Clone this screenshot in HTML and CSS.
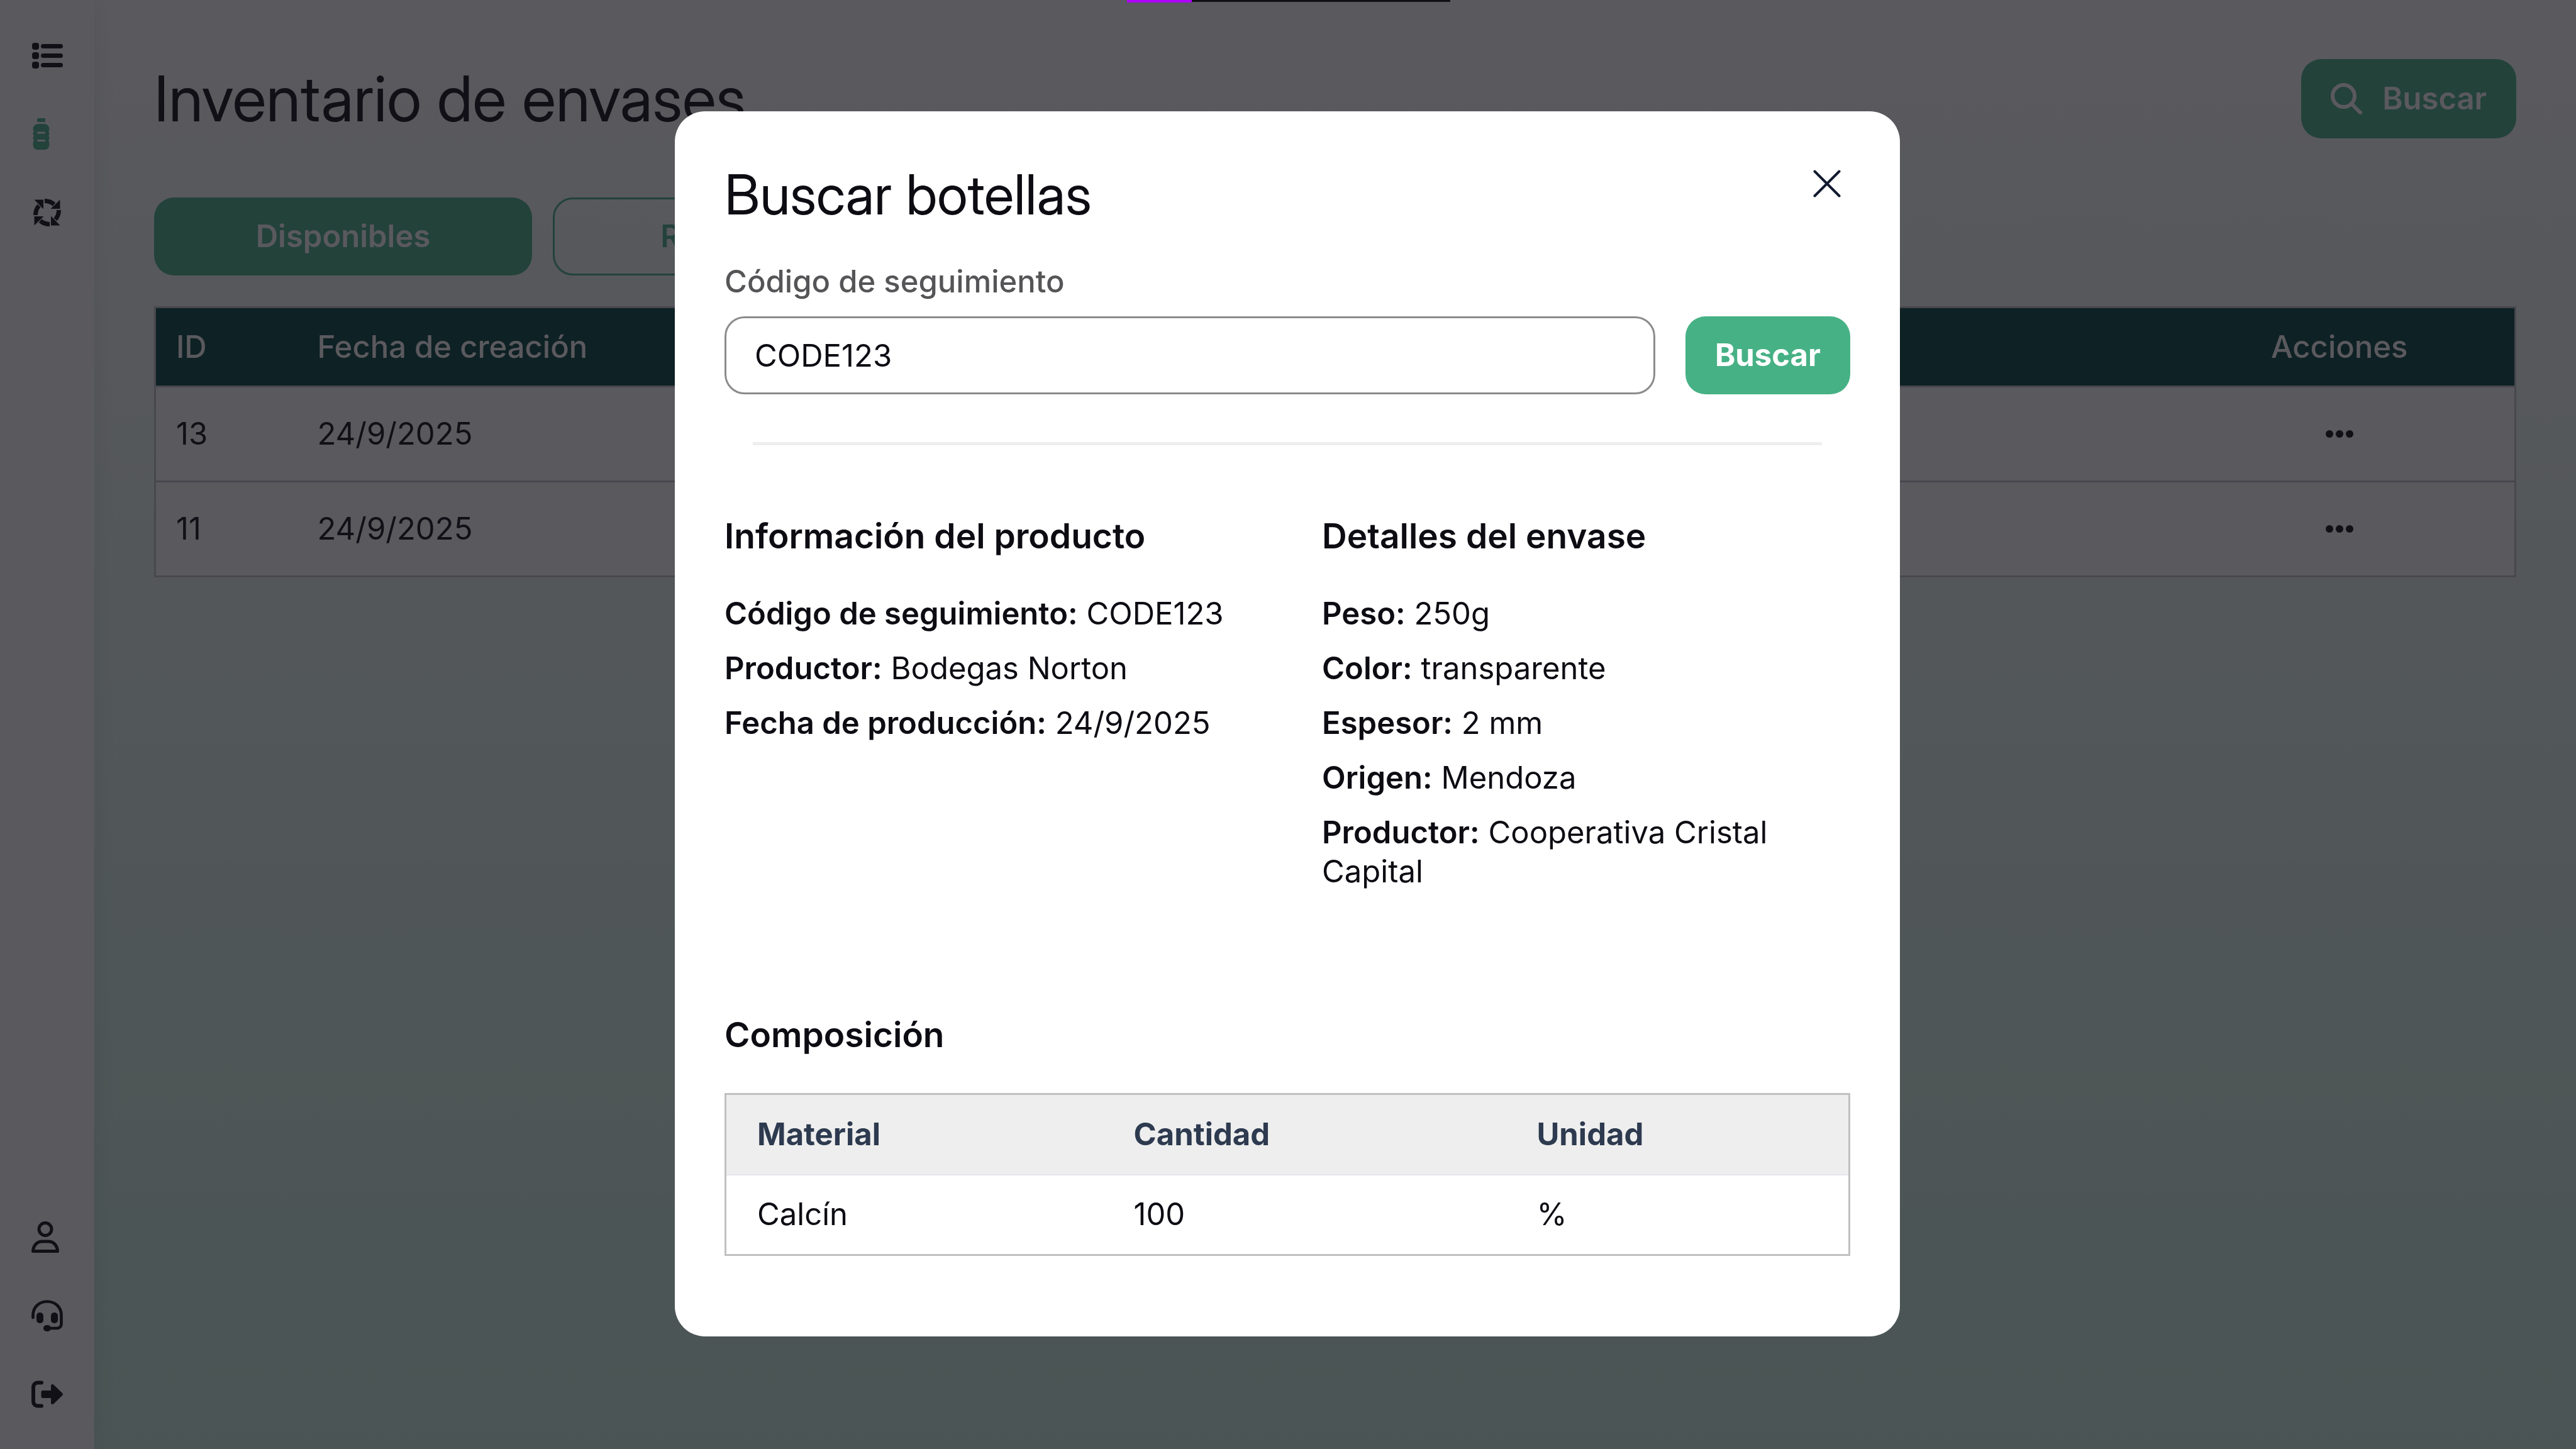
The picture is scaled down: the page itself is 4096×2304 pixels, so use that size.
FILE: index.html
```html
<!DOCTYPE html>
<html lang="es">
<head>
<meta charset="utf-8">
<meta name="viewport" content="width=device-width, initial-scale=1">
<title>Inventario de envases</title>
<link rel="stylesheet" href="styles.css">
</head>
<body>
<div class="app">
  <nav class="sidebar">
    <div class="sidebar-group">
      <a class="nav-link" href="#" aria-label="Lista">
        <svg class="icon" viewBox="0 0 50 50" fill="currentColor"><rect x="1" y="5" width="11" height="11" rx="4"/><rect x="1" y="20" width="11" height="11" rx="4"/><rect x="1" y="35" width="11" height="11" rx="4"/><rect x="15" y="7" width="35" height="7" rx="3.5"/><rect x="15" y="22" width="35" height="7" rx="3.5"/><rect x="15" y="37" width="35" height="7" rx="3.5"/></svg>
      </a>
      <a class="nav-link nav-link-active" href="#" aria-label="Envases">
        <svg class="icon" viewBox="0 0 50 50" fill="currentColor"><rect x="9" y="0" width="13" height="6" rx="1"/><path fill-rule="evenodd" d="M11 9h9c5 0 8.500 4 8.500 8 0 2-.8 3-1.600 4 2.200 2 2.200 5.500 0 7 2.200 2 2.200 5 0 7.500 1 1 1.600 2.500 1.600 5.500 0 5-2.500 9-7 9h-12c-4.500 0-7-4-7-9 0-3 .6-4.500 1.600-5.500-2.200-2.500-2.200-5.500 0-7.500-2.200-1.500-2.200-5 0-7-.8-1-1.600-2-1.600-4C2.500 13 6 9 11 9zM10.500 21.500a1.500 1.500 0 0 0 0 3h10a1.500 1.500 0 0 0 0-3zM10.500 34a1.500 1.500 0 0 0 0 3h10a1.500 1.500 0 0 0 0-3z"/></svg>
      </a>
      <a class="nav-link" href="#" aria-label="Reciclaje">
        <svg class="icon" viewBox="0 0 50 50"><g id="arrow"><path d="M21 6.500c6 0 11 2 15 5.500" fill="none" stroke="currentColor" stroke-width="7"/><path fill="currentColor" d="M45.500 4.500v14.500H30.500z"/></g><use href="#arrow" transform="rotate(90 25 25)"/><use href="#arrow" transform="rotate(180 25 25)"/><use href="#arrow" transform="rotate(270 25 25)"/></svg>
      </a>
    </div>
    <div class="sidebar-group">
      <a class="nav-link" href="#" aria-label="Perfil">
        <svg class="icon" viewBox="0 0 50 50" fill="none" stroke="currentColor" stroke-width="5"><circle cx="22" cy="12.500" r="10"/><path stroke-linejoin="round" d="M2.500 47.500C3 38 9 32 17 32h10c8 0 14 6 14.500 15.500z"/></svg>
      </a>
      <a class="nav-link" href="#" aria-label="Soporte">
        <svg class="icon" viewBox="0 0 50 50" fill="currentColor"><path fill="none" stroke="currentColor" stroke-width="4.700" stroke-linecap="round" d="M2.500 28v-4C2.500 11.500 12.500 2.500 25 2.500S47.500 11.500 47.500 24v14c0 4-2.500 7-7 7H28"/><rect x="8" y="20" width="11" height="17" rx="5"/><rect x="31" y="20" width="11" height="17" rx="5"/><rect x="19" y="40" width="12" height="10" rx="5"/></svg>
      </a>
      <a class="nav-link" href="#" aria-label="Salir">
        <svg class="icon" viewBox="0 0 50 50" fill="currentColor"><path fill="none" stroke="currentColor" stroke-width="6" stroke-linecap="round" d="M16 6.500h-5.500c-4.500 0-7.500 3-7.500 7.500v22c0 4.500 3 7.500 7.500 7.500H16"/><path d="M18 19h13v-7c0-3 2.500-4 4.500-2l13 12.500c2 2 2 3 0 5l-13 12.500c-2 2-4.500 1-4.500-2v-7H18c-1.500 0-2.500-1-2.500-2.500v-7c0-1.500 1-2.500 2.500-2.500z"/></svg>
      </a>
    </div>
  </nav>

  <main class="main">
    <header class="page-header">
      <h1 class="page-title">Inventario de envases</h1>
      <button class="button button-header" type="button">
        <svg class="icon" viewBox="0 0 50 50" fill="none" stroke="currentColor" stroke-width="6" stroke-linecap="round"><circle cx="20.500" cy="20.500" r="17.500"/><path d="M33 33l14 14"/></svg>
        Buscar
      </button>
    </header>
    <div class="tabs">
      <button class="button tab" type="button">Disponibles</button>
      <button class="button button-outline tab" type="button">Reciclados</button>
    </div>
    <table class="inventory">
      <colgroup><col class="col-id"><col><col class="col-actions"></colgroup>
      <thead>
        <tr><th>ID</th><th>Fecha de creación</th><th class="centered">Acciones</th></tr>
      </thead>
      <tbody>
        <tr><td>13</td><td>24/9/2025</td><td><button class="more" type="button" aria-label="Acciones de 13"><svg class="dots" viewBox="0 0 44 14" fill="currentColor"><circle cx="6" cy="7" r="6"/><circle cx="22" cy="7" r="6"/><circle cx="38" cy="7" r="6"/></svg></button></td></tr>
        <tr><td>11</td><td>24/9/2025</td><td><button class="more" type="button" aria-label="Acciones de 11"><svg class="dots" viewBox="0 0 44 14" fill="currentColor"><circle cx="6" cy="7" r="6"/><circle cx="22" cy="7" r="6"/><circle cx="38" cy="7" r="6"/></svg></button></td></tr>
      </tbody>
    </table>
  </main>
</div>

<div class="overlay">
  <section class="modal" role="dialog" aria-modal="true" aria-labelledby="modal-title">
    <header class="modal-header">
      <h2 class="modal-title" id="modal-title">Buscar botellas</h2>
      <button class="close" type="button" aria-label="Cerrar"><svg class="close-icon" viewBox="0 0 44 44" fill="none" stroke="currentColor" stroke-width="4" stroke-linecap="round"><path d="M2.500 2.500l39 39M41.500 2.500l-39 39"/></svg></button>
    </header>
    <form class="search">
      <label class="search-label" for="code">Código de seguimiento</label>
      <div class="search-row">
        <input class="search-input" id="code" type="text" value="CODE123">
        <button class="button" type="button">Buscar</button>
      </div>
    </form>
    <hr class="divider">
    <div class="details">
      <section>
        <h3 class="section-title">Información del producto</h3>
        <ul class="facts">
          <li><strong>Código de seguimiento:</strong> CODE123</li>
          <li><strong>Productor:</strong> Bodegas Norton</li>
          <li><strong>Fecha de producción:</strong> 24/9/2025</li>
        </ul>
      </section>
      <section>
        <h3 class="section-title">Detalles del envase</h3>
        <ul class="facts">
          <li><strong>Peso:</strong> 250g</li>
          <li><strong>Color:</strong> transparente</li>
          <li><strong>Espesor:</strong> 2 mm</li>
          <li><strong>Origen:</strong> Mendoza</li>
          <li><strong>Productor:</strong> Cooperativa Cristal Capital</li>
        </ul>
      </section>
    </div>
    <section>
      <h3 class="section-title">Composición</h3>
      <table class="composition">
        <colgroup><col class="col-material"><col class="col-amount"><col></colgroup>
        <thead><tr><th>Material</th><th>Cantidad</th><th>Unidad</th></tr></thead>
        <tbody><tr><td>Calcín</td><td>100</td><td>%</td></tr></tbody>
      </table>
    </section>
  </section>
</div>
<div class="page-progress"><div class="page-progress-bar"></div></div>
</body>
</html>
```
FILE: styles.css
```css
:root {
  --ink: #0d0c13;
  --green: #46b185;
  --green-dark: #03443c;
}

* { box-sizing: border-box; }

body {
  margin: 0;
  font-family: Inter, "Liberation Sans", sans-serif;
  font-size: 49px;
  line-height: 62px;
  color: var(--ink);
}

h1, h2, h3, ul { margin: 0; padding: 0; }

button, input { font: inherit; color: inherit; }

.app {
  display: flex;
  min-height: 100vh;
  background: linear-gradient(#ffffff 0%, #c8efdc 100%);
}

.sidebar {
  display: flex;
  flex-direction: column;
  justify-content: space-between;
  width: 150px;
  padding: 63px 50px 62px;
  background: #ffffff;
  box-shadow: 0 0 32px rgba(0, 70, 60, 0.1);
}

.sidebar-group { display: grid; gap: 75px; }

.nav-link { display: block; height: 50px; color: var(--ink); }
.nav-link-active { color: var(--green); }

.icon { display: block; width: 50px; height: 50px; }

.main { flex: 1; padding: 94px 95px; }

.page-header {
  display: flex;
  justify-content: space-between;
  align-items: center;
}

.page-title,
.modal-title {
  font-family: "Inter Display", Inter, "Liberation Sans", sans-serif;
  font-variation-settings: "opsz" 32;
  font-weight: 400;
}

.page-title { font-size: 100px; line-height: 120px; }

.button {
  display: inline-flex;
  align-items: center;
  justify-content: center;
  gap: 32px;
  height: 124px;
  padding: 0 47px;
  border: 0;
  border-radius: 32px;
  background: var(--green);
  color: #ffffff;
  font-weight: 700;
}

.button-header { height: 126px; font-weight: 600; }

.button-outline {
  border: 3px solid var(--green);
  background: transparent;
  color: var(--green);
}

.tabs { display: flex; gap: 33px; margin: 94px 0 49px; }
.tab { width: 601px; font-weight: 600; }

.inventory {
  width: 100%;
  table-layout: fixed;
  border-collapse: collapse;
  border: 3px solid #c4c4c8;
  background: #ffffff;
  text-align: left;
}

.inventory th {
  height: 126px;
  padding: 0 32px;
  background: var(--green-dark);
  color: #ffffff;
  font-weight: 500;
}

.inventory td {
  height: 151px;
  padding: 0 32px;
  border-top: 3px solid #c4c4c8;
}

.inventory .centered { text-align: center; }

.col-id { width: 226px; }
.col-actions { width: 558px; }

.more { display: block; margin: 0 auto; padding: 0; border: 0; background: none; }
.dots { display: block; width: 44px; height: 14px; }

.overlay {
  position: fixed;
  inset: 0;
  display: flex;
  align-items: center;
  justify-content: center;
  padding: 0 2px 2px 0;
  background: rgba(20, 18, 26, 0.7);
}

.modal {
  width: 1948px;
  max-width: 94vw;
  padding: 80px 79px 128px;
  border-radius: 48px;
  background: #ffffff;
}

.modal-header { display: flex; justify-content: space-between; }

.modal-title { font-size: 88px; line-height: 104px; }

.close {
  display: grid;
  place-items: center;
  width: 74px;
  height: 70px;
  padding: 0;
  border: 0;
  background: none;
  color: #111a2e;
}

.close-icon { width: 44px; height: 44px; }

.search { margin-top: 56px; }

.search-label {
  display: block;
  margin-bottom: 24px;
  color: #555558;
  font-weight: 500;
}

.search-row { display: flex; gap: 48px; }

.search-input {
  flex: 1;
  min-width: 0;
  height: 124px;
  padding: 0 45px;
  border: 3px solid #8b8b8b;
  border-radius: 32px;
  background: #ffffff;
}

.divider {
  height: 5px;
  margin: 76px 45px 110px;
  border: 0;
  background: #eeeeee;
}

.details {
  display: grid;
  grid-template-columns: 1fr 1fr;
  gap: 110px;
  margin-bottom: 194px;
}

.section-title {
  margin-bottom: 59px;
  font-size: 55px;
  line-height: 68px;
  font-weight: 600;
}

.facts { display: grid; gap: 25px; list-style: none; }
.facts strong { font-weight: 600; }

.composition {
  width: 100%;
  table-layout: fixed;
  border-collapse: collapse;
  border: 3px solid #c0c0c0;
  text-align: left;
}

.composition th,
.composition td { height: 128px; padding: 0 49px; }

.composition th {
  background: #eeeeee;
  color: #2d3a4f;
  font-weight: 700;
}

.composition td { border-top: 2px solid #e5e6ea; }

.col-material { width: 600px; }
.col-amount { width: 641px; }

.page-progress {
  position: fixed;
  top: 0;
  left: 50%;
  width: 514px;
  height: 3px;
  margin-left: -256px;
  background: #111014;
}

.page-progress-bar { width: 20%; height: 4px; background: #b000ff; }
```
